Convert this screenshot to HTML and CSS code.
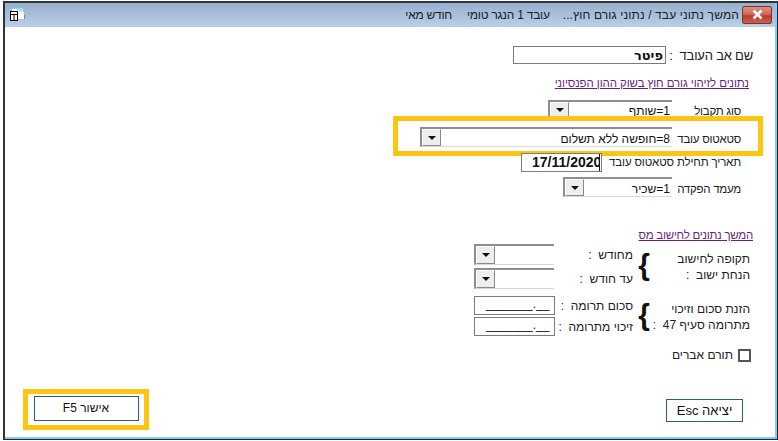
FILE: index.html
```html
<!DOCTYPE html>
<html lang="he" dir="rtl">
<head>
<meta charset="utf-8">
<title>המשך נתוני עבד</title>
<link rel="stylesheet" href="styles.css">
</head>
<body>
<main class="window">
 <div class="frame">
  <header class="titlebar">
    <button class="close" aria-label="סגור"><svg width="13" height="11" viewBox="0 0 13 11"><path d="M2.5 1.5 L10.5 9.5 M10.5 1.5 L2.5 9.5" stroke="#fff" stroke-width="2.6" fill="none"/></svg></button>
    <div class="title-items">
      <span class="title-main">המשך נתוני עבד / נתוני גורם חוץ...</span>
      <span>עובד 1 הנגר טומי</span>
      <span class="title-month">חודש מאי</span>
    </div>
    <svg class="appicon" width="16" height="16" viewBox="0 0 16 16"><path d="M3 2 L13 1 L15 6 L15 12 L5 12Z" fill="#fff"/><path d="M4 1 L12 1 L15 5 L9 3Z" fill="#8fe0dc"/><rect x="15" y="8" width="2" height="4" fill="#888"/><rect x="1.5" y="4.5" width="7" height="9" fill="#fff" stroke="#000"/><path d="M1.5 7.5 H8.5 M5 7.5 V13.5" stroke="#000" fill="none"/></svg>
  </header>

  <div class="content">
    <div class="row row-father">
      <label class="lbl lbl-father">שם אב העובד&nbsp; :</label>
      <input class="field field-father" value="פיטר" readonly>
    </div>
    <a class="link link-first" href="#">נתונים לזיהוי גורם חוץ בשוק ההון הפנסיוני</a>

    <div class="row row-type">
      <label class="lbl lbl-combo">סוג תקבול</label>
      <div class="combo combo-type"><span class="combo-text">1=שותף</span><span class="arrow"><i></i></span></div>
    </div>
    <div class="row row-status">
      <label class="lbl lbl-combo">סטאטוס עובד</label>
      <div class="combo combo-status"><span class="combo-text">8=חופשה ללא תשלום</span><span class="arrow"><i></i></span></div>
      <div class="highlight highlight-status"></div>
    </div>
    <div class="row row-date">
      <label class="lbl lbl-date">תאריך תחילת סטאטוס עובד</label>
      <div class="field field-date"><span class="date-value">17/11/2020</span></div>
    </div>
    <div class="row row-deposit">
      <label class="lbl lbl-combo">מעמד הפקדה</label>
      <div class="combo combo-deposit"><span class="combo-text">1=שכיר</span><span class="arrow"><i></i></span></div>
    </div>

    <a class="link link-second" href="#">המשך נתונים לחישוב מס</a>

    <section class="group group-period">
      <div class="group-title"><span>תקופה לחישוב</span><span>הנחת ישוב&nbsp; :</span></div>
      <span class="brace">{</span>
      <div class="group-fields">
        <div class="pair"><label>מחודש&nbsp; :</label><div class="combo combo-small"><span class="arrow"><i></i></span></div></div>
        <div class="pair"><label>עד חודש&nbsp; :</label><div class="combo combo-small"><span class="arrow"><i></i></span></div></div>
      </div>
    </section>

    <section class="group group-donation">
      <div class="group-title"><span>הזנת סכום וזיכוי</span><span>מתרומה סעיף 47&nbsp; :</span></div>
      <span class="brace">{</span>
      <div class="group-fields">
        <div class="pair"><label>סכום תרומה&nbsp; :</label><div class="field field-mask"><span dir="ltr">_______.__</span></div></div>
        <div class="pair"><label>זיכוי מתרומה&nbsp; :</label><div class="field field-mask"><span dir="ltr">_______.__</span></div></div>
      </div>
    </section>

    <div class="check-row"><span class="checkbox"></span><label>תורם אברים</label></div>

    <footer class="actions">
      <button class="btn btn-esc">יציאה Esc</button>
      <div class="highlight-ok"><button class="btn btn-ok">אישור F5</button></div>
    </footer>
  </div>
 </div>
</main>
</body>
</html>
```
FILE: styles.css
```css
* { box-sizing: border-box; }
html, body { margin: 0; padding: 0; width: 778px; height: 441px; overflow: hidden; background: #fff; }
body { font-family: "Liberation Sans", Arial, sans-serif; font-size: 12px; color: #222; padding: 1px 0 0 3px; }
.window { width: 775px; height: 439px; border-style: solid; border-color: #2c3440 #1b2a3a #1b2a3a #2c3440; border-width: 2px 1px 1px 2px; background: #fff; }
.frame { height: 100%; border-right: 2px solid #84cdf0; border-bottom: 2px solid #84cdf0; display: flex; flex-direction: column; }
.titlebar { height: 24px; flex: none; background: linear-gradient(#98aecb, #b9d0e9); display: flex; align-items: center; padding: 0 3px 0 4px; }
.close { width: 30px; height: 18px; margin: 0 0 1px; padding: 0; border: 1px solid #7b3430; border-radius: 2px; background: linear-gradient(#df8f80, #d06a58 45%, #bc3c28 55%, #c9604e); display: flex; align-items: center; justify-content: center; }
.title-items { display: flex; gap: 13px; font-size: 12px; letter-spacing: -0.25px; color: #1c1c1c; margin-right: 3px; white-space: nowrap; }
.title-main { letter-spacing: 0.12px; }
.title-month { margin-right: 2px; }
.appicon { margin-right: auto; }
.content { flex: 1; display: flex; flex-direction: column; align-items: stretch; padding: 19px 22px 0 0; }
.row { display: flex; align-items: center; position: relative; }
.lbl { flex: none; white-space: nowrap; }
.row-father { height: 18px; }
.lbl-father { width: 87px; font-size: 13px; letter-spacing: -0.2px; }
.field { border: 1px solid #7a7a7a; background: #fff; }
.field-father { width: 153px; height: 18px; padding: 0 2px; font: bold 13px "DejaVu Sans", sans-serif; color: #111; text-align: right; outline: none; border-radius: 0; }
.link { color: #6d1f7c; text-decoration: underline; font-size: 11.5px; }
.link-first { margin: 12px 4px 0 0; height: 14px; line-height: 14px; letter-spacing: -0.1px; }
.row-type { height: 18px; margin-top: 10px; }
.row-status { height: 20px; margin-top: 9px; }
.row-date { height: 18px; margin-top: 6px; }
.row-deposit { height: 20px; margin-top: 6px; }
.lbl-combo { width: 81px; padding: 3px 12px 0 0; font-size: 11.5px; letter-spacing: -0.25px; }
.lbl-date { width: 151px; padding-right: 12px; font-size: 11.5px; letter-spacing: -0.15px; }
.combo { display: flex; justify-content: space-between; align-items: center; height: 100%; background: #fff; border-top: 2px solid #8e8e8e; border-left: 2px solid #8e8e8e; border-bottom: 1px solid #d8d8d8; padding: 0 2px 0 0; position: relative; }
.combo-type { width: 124px; }
.combo-status { width: 252px; }
.combo-deposit { width: 109px; }
.combo-small { width: 80px; height: 21px; }
.combo-text { color: #111; padding-top: 2px; }
.arrow { position: absolute; left: 0; top: 0; bottom: 0; width: 19px; background: #eee; border: 1px solid #fff; border-right-color: #888; border-bottom-color: #888; display: flex; align-items: center; justify-content: center; }
.arrow i { width: 0; height: 0; border: 4px solid transparent; border-top: 4px solid #111; border-bottom: 0; }
.highlight { position: absolute; right: -10px; top: -11px; width: 370px; height: 40px; border: 5px solid #fdc512; pointer-events: none; }
.field-date { width: 81px; height: 19px; overflow: hidden; font: bold 14px/17px "Liberation Sans", sans-serif; color: #111; direction: ltr; padding-left: 10px; white-space: nowrap; }
.date-value { display: block; width: 68px; overflow: hidden; border-right: 1px solid #111; }
.link-second { margin: 31px 0 0 0; height: 14px; line-height: 14px; letter-spacing: -0.25px; }
.group { display: flex; align-items: center; }
.group-period { margin-top: 2px; height: 45px; }
.group-donation { margin-top: 7px; height: 40px; }
.group-title { width: 102px; display: flex; flex-direction: column; gap: 2px; line-height: 14px; flex: none; padding-right: 3px; white-space: nowrap; }
.group-period .group-title { padding-top: 1px; }
.group-donation .group-title { padding-top: 2px; }
.brace { width: 18px; flex: none; font: bold 30px/30px "Liberation Sans", sans-serif; text-align: center; direction: ltr; color: #111; margin-top: -3px; padding-left: 4px; }
.group-fields { display: flex; flex-direction: column; gap: 3px; }
.group-donation .group-fields { gap: 2px; }
.pair { display: flex; align-items: center; }
.pair label { width: 79px; white-space: nowrap; }
.group-donation .pair label { width: 78px; }
.field-mask { width: 81px; height: 19px; border: 1px solid #7a7a7a; text-align: left; padding-left: 11px; font-size: 12px; line-height: 14px; color: #111; }
.check-row { display: flex; align-items: center; gap: 5px; margin: 12px 2px 0 0; height: 14px; }
.checkbox { width: 13px; height: 13px; border: 2px solid #555; background: #fff; }
.actions { display: flex; justify-content: space-between; align-items: flex-end; margin-top: auto; margin-bottom: 7px; margin-left: 18px; padding: 0 10px 0 0; }
.highlight-ok { border: 5px solid #fdc512; width: 126px; height: 41px; display: flex; align-items: center; justify-content: center; padding-bottom: 3px; }
.btn { font: 13px "Liberation Sans", sans-serif; background: #fff; border: 1px solid #2a5b8f; color: #111; padding: 0; border-radius: 0; white-space: nowrap; }
.btn-esc { width: 77px; height: 23px; margin-bottom: 8px; }
.btn-ok { width: 105px; height: 25px; font-size: 12px; }
```
